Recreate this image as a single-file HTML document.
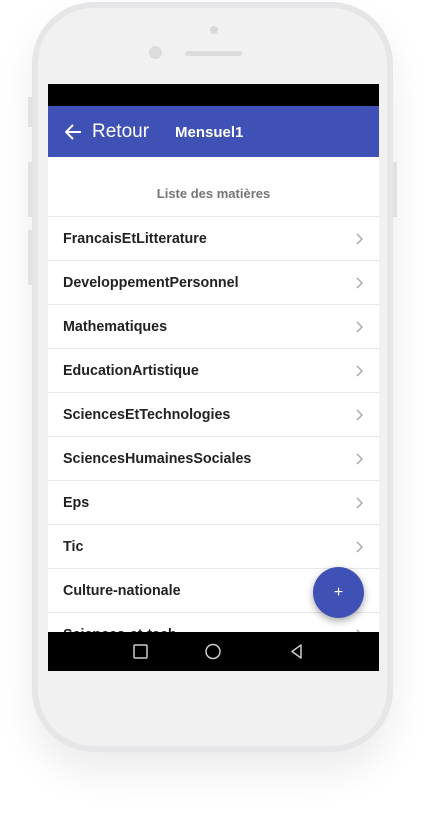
<!DOCTYPE html>
<html><head><meta charset="utf-8"><style>
*{margin:0;padding:0;box-sizing:border-box}
body{width:424px;height:825px;background:#fff;position:relative;overflow:hidden;font-family:"Liberation Sans",Arial,sans-serif}
.phone{position:absolute;left:32px;top:2px;width:361px;height:750px;border-radius:62px;background:#e6e6e9;box-shadow:0 20px 40px rgba(0,0,0,0.08)}
.inner{position:absolute;left:38px;top:8px;width:349px;height:738px;border-radius:56px;background:#f1f1f1}
.btn{position:absolute;background:#e2e2e5;width:4px}
.screen{position:absolute;left:48px;top:84px;width:331px;height:587px;background:#fff;overflow:hidden}
.status{height:22px;background:#000}
.bar{height:51px;background:#3f51b5;color:#fff;position:relative}
.bar .r{position:absolute;left:44px;top:15px;font-size:19px}
.bar .m{position:absolute;left:127px;top:18px;font-size:15px;font-weight:bold}
.title{height:60px;text-align:center;padding-top:29px;font-size:13px;font-weight:bold;color:#757575;border-bottom:1px solid #e8e8e8}
.row{height:44px;border-bottom:1px solid #e8e8e8;position:relative;font-size:14.3px;font-weight:bold;color:#222;padding:14px 0 0 15px}
.row svg{position:absolute;right:15px;top:16px}
.nav{position:absolute;left:0;top:548px;width:331px;height:39px;background:#000}
.fab{position:absolute;left:265px;top:483px;width:51px;height:51px;border-radius:50%;background:#3f51b5;color:#fff;text-align:center;line-height:51px;font-size:16px;box-shadow:0 3px 8px rgba(0,0,0,0.35)}
</style></head><body>
<div class="phone"></div>
<div class="btn" style="left:28px;top:97px;height:30px"></div>
<div class="btn" style="left:28px;top:162px;height:55px"></div>
<div class="btn" style="left:28px;top:230px;height:55px"></div>
<div class="btn" style="left:393px;top:162px;height:55px"></div>
<div class="inner"></div>
<div style="position:absolute;left:210px;top:26px;width:8px;height:8px;border-radius:50%;background:#d8d8d8"></div>
<div style="position:absolute;left:149px;top:46px;width:13px;height:13px;border-radius:50%;background:#dcdcdc"></div>
<div style="position:absolute;left:185px;top:51px;width:57px;height:5px;border-radius:3px;background:#dcdcdc"></div>
<div class="screen">
<div class="status"></div>
<div class="bar"><svg style="position:absolute;left:17px;top:18px" width="17" height="16" viewBox="0 0 17 16"><path d="M16 8H2M8 1L1 8l7 7" stroke="#fff" stroke-width="2" fill="none"/></svg><span class="r">Retour</span><span class="m">Mensuel1</span></div>
<div class="title">Liste des matières</div>
<div class="row">FrancaisEtLitterature<svg width="8" height="12"><path d="M1 1l5 5-5 5" stroke="#aaa" stroke-width="1.5" fill="none"/></svg></div>
<div class="row">DeveloppementPersonnel<svg width="8" height="12"><path d="M1 1l5 5-5 5" stroke="#aaa" stroke-width="1.5" fill="none"/></svg></div>
<div class="row">Mathematiques<svg width="8" height="12"><path d="M1 1l5 5-5 5" stroke="#aaa" stroke-width="1.5" fill="none"/></svg></div>
<div class="row">EducationArtistique<svg width="8" height="12"><path d="M1 1l5 5-5 5" stroke="#aaa" stroke-width="1.5" fill="none"/></svg></div>
<div class="row">SciencesEtTechnologies<svg width="8" height="12"><path d="M1 1l5 5-5 5" stroke="#aaa" stroke-width="1.5" fill="none"/></svg></div>
<div class="row">SciencesHumainesSociales<svg width="8" height="12"><path d="M1 1l5 5-5 5" stroke="#aaa" stroke-width="1.5" fill="none"/></svg></div>
<div class="row">Eps<svg width="8" height="12"><path d="M1 1l5 5-5 5" stroke="#aaa" stroke-width="1.5" fill="none"/></svg></div>
<div class="row">Tic<svg width="8" height="12"><path d="M1 1l5 5-5 5" stroke="#aaa" stroke-width="1.5" fill="none"/></svg></div>
<div class="row">Culture-nationale<svg width="8" height="12"><path d="M1 1l5 5-5 5" stroke="#aaa" stroke-width="1.5" fill="none"/></svg></div>
<div class="row">Sciences-et-tech<svg width="8" height="12"><path d="M1 1l5 5-5 5" stroke="#aaa" stroke-width="1.5" fill="none"/></svg></div>
<div class="fab">+</div>
<div class="nav"><svg width="331" height="39"><rect x="86" y="13" width="13" height="13" rx="1" stroke="#ccc" stroke-width="1.5" fill="none"/><circle cx="165" cy="19.5" r="7" stroke="#ccc" stroke-width="1.5" fill="none"/><path d="M244 19.5l9-6.5v13z" stroke="#ccc" stroke-width="1.5" fill="none" stroke-linejoin="round"/></svg></div>
</div>
</body></html>
